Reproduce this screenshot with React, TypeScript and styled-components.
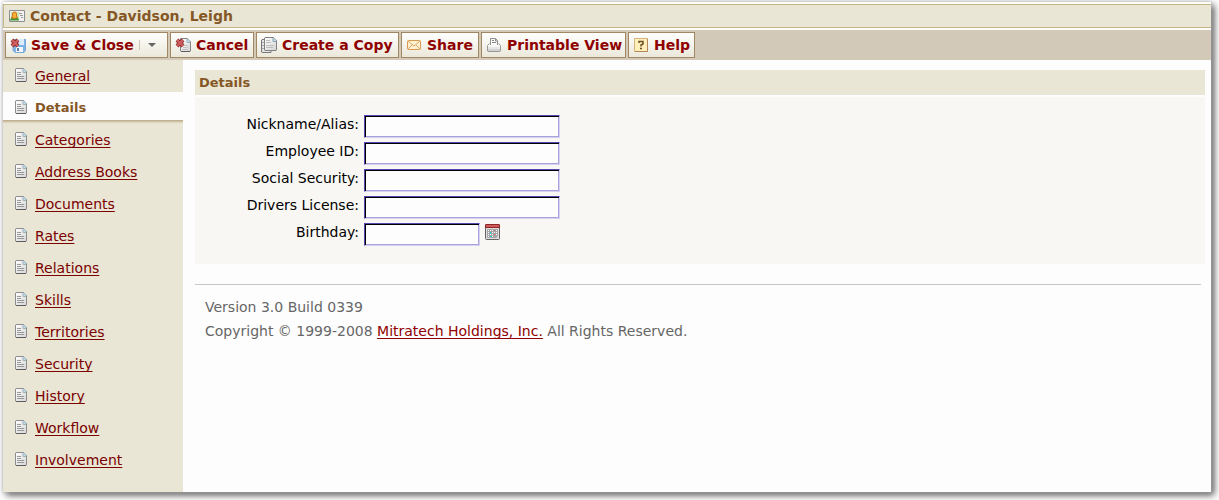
import React from "react";
import styled, { createGlobalStyle, css } from "styled-components";

const GlobalStyle = createGlobalStyle`
  *, *::before, *::after { box-sizing: border-box; }
  body {
    margin: 0;
    background: #fdfdfd;
    color: #000;
    font-family: "DejaVu Sans", Verdana, sans-serif;
    font-size: 14px;
    line-height: 20px;
  }
`;

const Stage = styled.div`
  display: flex;
  min-height: 100vh;
  padding: 2px 8px 8px 3px;
  background: #fdfdfd;
  overflow: hidden;
`;

const Window = styled.div`
  flex: 1;
  display: flex;
  flex-direction: column;
  min-width: 0;
  padding-top: 2px;
  background: #fdfdfd;
  box-shadow: 0 0 3px #bbb, 3px 3px 7px rgba(0, 0, 0, 0.7);
`;

const TitleBar = styled.header`
  display: flex;
  align-items: center;
  gap: 5px;
  height: 24px;
  padding-left: 5px;
  border: 1px solid #c6b788;
  border-right: 0;
  background: #e9e6d5;
`;

const Title = styled.h1`
  margin: 0;
  font-size: 14px;
  line-height: 20px;
  color: #855725;
`;

const Toolbar = styled.nav`
  display: flex;
  gap: 2px;
  margin-top: 2px;
  padding: 2px;
  background: #d3c9b8;
`;

const ToolButton = styled.button<{ $width: number }>`
  display: flex;
  align-items: center;
  gap: 5px;
  width: ${(p) => p.$width}px;
  height: 26px;
  padding: 0 0 0 4px;
  border: 1px solid #a18862;
  background: linear-gradient(#fefefd, #ebe8da);
  color: #8f0000;
  font: bold 14px/20px "DejaVu Sans", Verdana, sans-serif;
  white-space: nowrap;
  cursor: pointer;
`;

const SplitMark = styled.span`
  display: flex;
  align-items: center;
  height: 10px;
  padding-left: 8px;
  border-left: 1px solid #c9c6bc;
`;

const Body = styled.div`
  flex: 1;
  display: flex;
`;

const Sidebar = styled.nav`
  flex: 0 0 180px;
  background: #e9e6d5;
`;

const NavList = styled.ul`
  margin: 0;
  padding: 0;
  list-style: none;
`;

const NavRow = styled.li<{ $active?: boolean }>`
  display: flex;
  align-items: center;
  gap: 8px;
  height: 32px;
  padding-left: 12px;
  ${(p) =>
    p.$active &&
    css`
      background: linear-gradient(#fdfdfd 28px, #c0ae8c 28px, #c3b393 29px, #d9d0b7 30px, #e4dfcb 31px, #e9e6d5);
    `}
`;

const underlined = css`
  text-decoration: underline 1px;
  text-underline-offset: 2px;
  text-decoration-skip-ink: none;
`;

const NavLink = styled.a<{ $active?: boolean }>`
  ${underlined}
  color: #7b0000;
  ${(p) =>
    p.$active &&
    css`
      color: #855725;
      font-size: 13px;
      font-weight: bold;
      text-decoration: none;
    `}
`;

const Main = styled.main`
  flex: 1;
  min-width: 0;
  padding: 10px 6px 0 12px;
`;

const SectionTitle = styled.h2`
  margin: 0 0 2px;
  padding: 3px 4px 2px;
  background: #e9e6d5;
  color: #855725;
  font-size: 13px;
  line-height: 20px;
`;

const Form = styled.form`
  display: flex;
  flex-direction: column;
  gap: 4px;
  padding: 18px 0;
  background: #f8f7f3;
`;

const Field = styled.div`
  display: grid;
  grid-template-columns: 164px auto auto;
  justify-content: start;
  column-gap: 5px;
  height: 23px;
`;

const Label = styled.label`
  text-align: right;
  line-height: 18px;
`;

const TextInput = styled.input<{ $short?: boolean }>`
  width: ${(p) => (p.$short ? 116 : 196)}px;
  height: 23px;
  padding: 0 4px;
  border: 1px solid;
  border-color: #5548b0 #d6d1f0 #d6d1f0 #5548b0;
  background: #fdfdfd;
  box-shadow: inset 1px 1px #000, inset -1px -1px #a9a2dc;
  font: 14px "DejaVu Sans", Verdana, sans-serif;
`;

const IconButton = styled.button`
  display: flex;
  align-items: center;
  height: 18px;
  padding: 0;
  border: 0;
  background: none;
  cursor: pointer;
`;

const Footer = styled.footer`
  margin: 20px 4px 0 0;
  padding: 10px;
  border-top: 1px solid #c8c8c8;
  color: #666;
  line-height: 24px;
`;

const FooterLine = styled.p`
  margin: 0;
`;

const FooterLink = styled.a`
  ${underlined}
  color: #8f0000;
`;

const Glyph = styled.svg`
  flex: none;
  display: block;
`;

const PaperShade = () => (
  <defs>
    <linearGradient id="paper" x1="0" y1="0" x2="1" y2="1">
      <stop offset="0" stopColor="#ffffff" />
      <stop offset="1" stopColor="#d4d4d4" />
    </linearGradient>
  </defs>
);

const PageIcon = () => (
  <Glyph width="12" height="16" viewBox="0 0 12 16" aria-hidden="true">
    <path d="M1 .5h7.500l3 3V13l-.5.500H1L.5 13V1z" fill="url(#paper)" stroke="#8d8d8d" />
    <path d="M1 13.500h10" stroke="#5e5e5e" />
    <path d="M8 1h1l2 2v1.500H8z" fill="#b9dbe8" />
    <path d="M8 1v3.500h3" fill="none" stroke="#9db5be" />
    <path d="M2 4.500h4M2 6.500h4M2 8.500h7M2 10.500h7" stroke="#9a9a9a" />
  </Glyph>
);

const ContactIcon = () => (
  <Glyph width="16" height="12" viewBox="0 0 16 12" aria-hidden="true">
    <PaperShade />
    <path d="M.5.500h15v11H.5z" fill="#f1f1f1" stroke="#8d8d8d" />
    <path d="M2 2h8v8H2z" fill="#cbe6b4" />
    <path d="M1 10.500c0-2 2-3.500 4.500-3.500S10 8.500 10 10.500z" fill="#3f9a34" />
    <path d="M3.500 4a2 2 0 0 1 4 0v2l1 1.500-3 1-3-1 1-1.500z" fill="#f5b23a" stroke="#cf7014" />
    <path d="M10 3.500h3M11 5.500h3M12 7.500h2" stroke="#9a9a9a" />
  </Glyph>
);

const Cross = () => (
  <>
    <path d="M2 3l6 6M8 3L2 9" stroke="#8f3434" strokeWidth="4" />
    <path d="M2 3l6 6M8 3L2 9" stroke="#d46060" strokeWidth="2" />
  </>
);

const SaveIcon = () => (
  <Glyph width="16" height="16" viewBox="0 0 16 16" aria-hidden="true">
    <path d="M5 2.500h10.500v11L14 15.500H5l-2-2V4z" fill="#7fb3e6" stroke="#79a8d6" />
    <path d="M7 2h7v6H7z" fill="#dcecfa" />
    <path d="M6 10h7v5H6z" fill="#f4f8fc" />
    <path d="M7 11h2v3H7z" fill="#5c7f9f" />
    <Cross />
  </Glyph>
);

const CancelIcon = () => (
  <Glyph width="16" height="16" viewBox="0 0 16 16" aria-hidden="true">
    <path d="M5.500 1.500h7l3 3V14l-.5.500H6l-.5-.5z" fill="url(#paper)" stroke="#858585" />
    <path d="M6 14.500h9" stroke="#5e5e5e" />
    <path d="M12 2h1l2 2v1.500h-3z" fill="#b9dbe8" />
    <path d="M12 2v3.500h3" fill="none" stroke="#9db5be" />
    <path d="M9 8.500h4M8 10.500h5M7 12.500h6" stroke="#c4c4c4" />
    <Cross />
  </Glyph>
);

const CopyIcon = () => (
  <Glyph width="16" height="16" viewBox="0 0 16 16" aria-hidden="true">
    <path d="M1 2.500h9v13H1L.5 15V3z" fill="#e5e5e5" stroke="#777" />
    <path d="M1 5.500h2M1 8.500h2M1 11.500h2" stroke="#aaa" />
    <path d="M4 .5h8.500l3 3V13l-.5.500H4l-.5-.5V1z" fill="url(#paper)" stroke="#808080" />
    <path d="M12 1h1l2 2v1.500h-3z" fill="#b9dbe8" />
    <path d="M12 1v3.500h3" fill="none" stroke="#8faab4" />
    <path d="M5 3.500h4M5 5.500h5M5 8.500h8M5 10.500h7" stroke="#bcbcbc" />
  </Glyph>
);

const MailIcon = () => (
  <Glyph width="16" height="12" viewBox="0 0 16 12" aria-hidden="true">
    <rect x="1.500" y="1.500" width="13" height="9" rx="1" fill="#fff0cf" stroke="#d99a50" />
    <path d="M2 2l6 5 6-5M2 10l4-4M14 10l-4-4" fill="none" stroke="#dfa866" />
  </Glyph>
);

const PrintIcon = () => (
  <Glyph width="16" height="16" viewBox="0 0 16 16" aria-hidden="true">
    <path d="M4.500 8V1.500h5l2 2V8" fill="#fafafa" stroke="#8f8f8f" />
    <path d="M6 3.500h2M6 5.500h4M9.500 2v2h2" fill="none" stroke="#888" />
    <path d="M3.500 6.500l-2 2V14l.5.500h12l.5-.5V8.500l-2-2" fill="none" stroke="#999" />
    <path d="M2 8h12v6H2z" fill="#d2d2d2" />
    <path d="M2 8h12v2H2z" fill="#f6f6f6" />
    <path d="M2 10h12v2H2z" fill="#e6e6e6" />
  </Glyph>
);

const HelpIcon = () => (
  <Glyph width="16" height="16" viewBox="0 0 16 16" aria-hidden="true">
    <path d="M1.500 1.500h13v13h-13z" fill="#ffefb9" stroke="#d5b27e" />
    <path d="M2 14.500h12.500V2" fill="none" stroke="#b98457" />
    <path d="M6 6V4.500h4V7L8 8v1.500M7 11.500h2" fill="none" stroke="#6d4d27" strokeWidth="1.500" />
  </Glyph>
);

const CalendarIcon = () => (
  <Glyph width="15" height="16" viewBox="0 0 15 16" aria-hidden="true">
    <rect x=".5" y=".5" width="14" height="15" rx="1" fill="#dedede" stroke="#666" />
    <path d="M1 0h13l1 1v3H0V1z" fill="#8e2525" />
    <path d="M1 1h13v2H1z" fill="#cf5a5a" />
    <path d="M2 5h11v7l-2 2H2z" fill="#a6a6a6" />
    <path d="M3 6.500h10M3 8.500h10M3 10.500h10M3 12.500h6" stroke="#fff" strokeDasharray="1 1" />
    <path d="M5 8h1v2H5zM5 12h2v1H5z" fill="#18cbd3" />
    <path d="M9 6h1v1H9zM9 10h1v1H9z" fill="#dc5757" />
  </Glyph>
);

const tools = [
  { label: "Save & Close", icon: <SaveIcon />, width: 163, split: true },
  { label: "Cancel", icon: <CancelIcon />, width: 84 },
  { label: "Create a Copy", icon: <CopyIcon />, width: 143 },
  { label: "Share", icon: <MailIcon />, width: 78 },
  { label: "Printable View", icon: <PrintIcon />, width: 145 },
  { label: "Help", icon: <HelpIcon />, width: 67 },
];

const sections = [
  "General",
  "Details",
  "Categories",
  "Address Books",
  "Documents",
  "Rates",
  "Relations",
  "Skills",
  "Territories",
  "Security",
  "History",
  "Workflow",
  "Involvement",
];

const fields = [
  { id: "nickname", label: "Nickname/Alias:" },
  { id: "employee", label: "Employee ID:" },
  { id: "social", label: "Social Security:" },
  { id: "license", label: "Drivers License:" },
  { id: "birthday", label: "Birthday:", date: true },
];

export default function App() {
  return (
    <>
      <GlobalStyle />
      <Stage>
        <Window>
          <TitleBar>
            <ContactIcon />
            <Title>Contact - Davidson, Leigh</Title>
          </TitleBar>
          <Toolbar aria-label="Actions">
            {tools.map((t) => (
              <ToolButton key={t.label} type="button" $width={t.width}>
                {t.icon}
                {t.label}
                {t.split && (
                  <SplitMark>
                    <Glyph width="8" height="4" viewBox="0 0 8 4" aria-hidden="true">
                      <path d="M0 0h8L4 4z" fill="#666" />
                    </Glyph>
                  </SplitMark>
                )}
              </ToolButton>
            ))}
          </Toolbar>
          <Body>
            <Sidebar aria-label="Sections">
              <NavList>
                {sections.map((s) => (
                  <NavRow key={s} $active={s === "Details"}>
                    <PageIcon />
                    <NavLink href="#" $active={s === "Details"}>
                      {s}
                    </NavLink>
                  </NavRow>
                ))}
              </NavList>
            </Sidebar>
            <Main>
              <SectionTitle>Details</SectionTitle>
              <Form>
                {fields.map((f) => (
                  <Field key={f.id}>
                    <Label htmlFor={f.id}>{f.label}</Label>
                    <TextInput id={f.id} type="text" $short={f.date} />
                    {f.date && (
                      <IconButton type="button" aria-label="Choose date">
                        <CalendarIcon />
                      </IconButton>
                    )}
                  </Field>
                ))}
              </Form>
              <Footer>
                <FooterLine>Version 3.0 Build 0339</FooterLine>
                <FooterLine>
                  Copyright © 1999-2008 <FooterLink href="#">Mitratech Holdings, Inc.</FooterLink> All Rights Reserved.
                </FooterLine>
              </Footer>
            </Main>
          </Body>
        </Window>
      </Stage>
    </>
  );
}
